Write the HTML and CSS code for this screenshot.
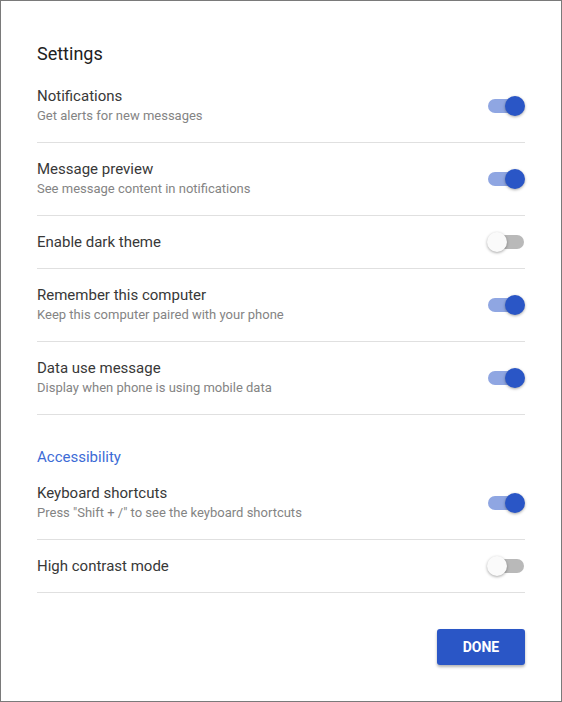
FILE: index.html
```html
<!DOCTYPE html>
<html lang="en">
<head>
<meta charset="utf-8">
<title>Settings</title>
<link rel="stylesheet" href="styles.css">
</head>
<body>
<div class="dialog">
  <h1 class="title">Settings</h1>
  <div class="list">
    <div class="row">
      <div class="text">
        <div class="label">Notifications</div>
        <div class="desc">Get alerts for new messages</div>
      </div>
      <span class="switch on"><span class="track"></span><span class="thumb"></span></span>
    </div>
    <div class="row">
      <div class="text">
        <div class="label">Message preview</div>
        <div class="desc">See message content in notifications</div>
      </div>
      <span class="switch on"><span class="track"></span><span class="thumb"></span></span>
    </div>
    <div class="row">
      <div class="text">
        <div class="label">Enable dark theme</div>
      </div>
      <span class="switch"><span class="track"></span><span class="thumb"></span></span>
    </div>
    <div class="row">
      <div class="text">
        <div class="label">Remember this computer</div>
        <div class="desc">Keep this computer paired with your phone</div>
      </div>
      <span class="switch on"><span class="track"></span><span class="thumb"></span></span>
    </div>
    <div class="row">
      <div class="text">
        <div class="label">Data use message</div>
        <div class="desc">Display when phone is using mobile data</div>
      </div>
      <span class="switch on"><span class="track"></span><span class="thumb"></span></span>
    </div>
  </div>
  <h2 class="section">Accessibility</h2>
  <div class="list">
    <div class="row">
      <div class="text">
        <div class="label">Keyboard shortcuts</div>
        <div class="desc">Press "Shift + /" to see the keyboard shortcuts</div>
      </div>
      <span class="switch on"><span class="track"></span><span class="thumb"></span></span>
    </div>
    <div class="row">
      <div class="text">
        <div class="label">High contrast mode</div>
      </div>
      <span class="switch"><span class="track"></span><span class="thumb"></span></span>
    </div>
  </div>
  <div class="actions">
    <button class="done" type="button">DONE</button>
  </div>
</div>
</body>
</html>
```
FILE: styles.css
```css
* { box-sizing: border-box; }
html, body { margin: 0; padding: 0; background: #ffffff; }
body {
  font-family: Roboto, "Liberation Sans", Arial, sans-serif;
  color: #333333;
}
.dialog {
  width: 562px;
  height: 702px;
  border: 1px solid #7a7a7a;
  padding: 41px 36px 36px;
  display: flex;
  flex-direction: column;
}
.title {
  margin: 0 0 4px;
  font-size: 18px;
  line-height: 24px;
  font-weight: 400;
  color: #212121;
}
.list { display: flex; flex-direction: column; }
.row {
  display: flex;
  align-items: center;
  justify-content: space-between;
  padding: 16px 0;
  border-bottom: 1px solid #e0e0e0;
}
.label {
  font-size: 15px;
  line-height: 20px;
  color: #383838;
}
.desc {
  font-size: 13px;
  line-height: 20px;
  color: #848484;
}
.section {
  margin: 0;
  padding-top: 32px;
  font-size: 15px;
  line-height: 20px;
  font-weight: 400;
  color: #3c6bd6;
}
.switch {
  position: relative;
  width: 37px;
  height: 20px;
  flex: none;
}
.track {
  position: absolute;
  left: 0;
  top: 3px;
  width: 36px;
  height: 14px;
  border-radius: 7px;
  background: #b9b9b9;
}
.thumb {
  position: absolute;
  left: -1px;
  top: 0;
  width: 20px;
  height: 20px;
  border-radius: 50%;
  background: #fafafa;
  box-shadow: 0 1px 3px rgba(0,0,0,0.35);
}
.switch.on .track { background: #8fa6e2; }
.switch.on .thumb {
  left: 17px;
  background: #2a56c6;
}
.actions {
  display: flex;
  justify-content: flex-end;
  margin-top: 36px;
}
.done {
  width: 88px;
  height: 36px;
  border: none;
  border-radius: 3px;
  background: #2a56c6;
  color: #ffffff;
  font-family: Roboto, "Liberation Sans", Arial, sans-serif;
  font-size: 14px;
  font-weight: 700;
  box-shadow: 0 2px 3px rgba(0,0,0,0.3);
  padding: 0;
}
```
